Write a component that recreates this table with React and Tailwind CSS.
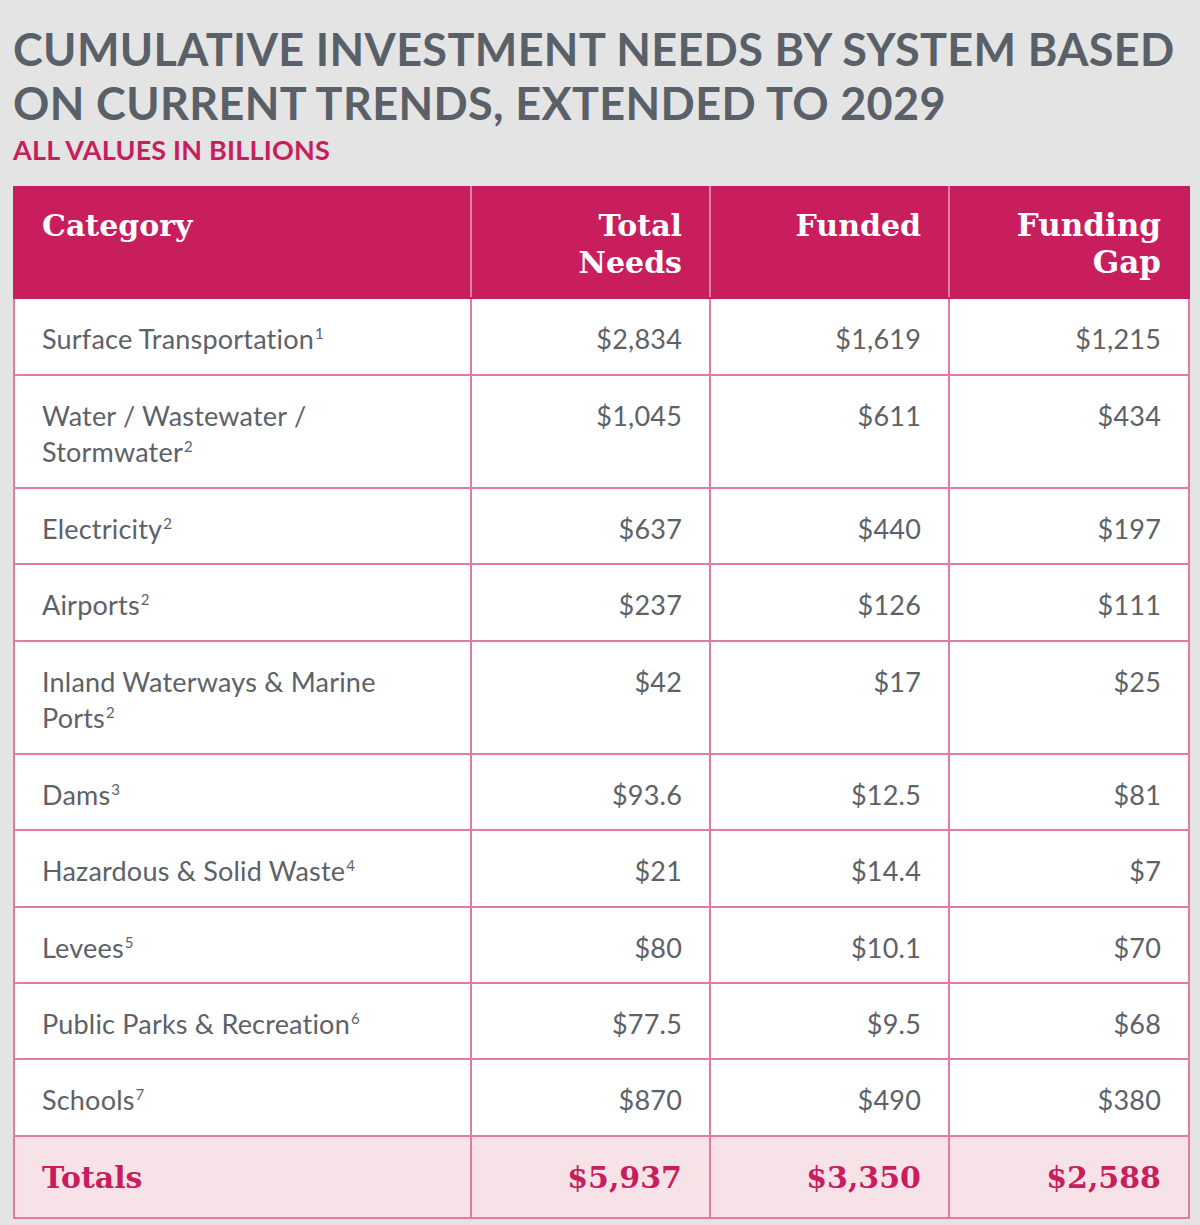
import React from 'react';

const rows = [
  { lines: ['Surface Transportation'], sup: '1', needs: '$2,834', funded: '$1,619', gap: '$1,215', h: 'h-[77px]' },
  { lines: ['Water / Wastewater /', 'Stormwater'], sup: '2', needs: '$1,045', funded: '$611', gap: '$434', h: 'h-[113px]' },
  { lines: ['Electricity'], sup: '2', needs: '$637', funded: '$440', gap: '$197', h: 'h-[76px]' },
  { lines: ['Airports'], sup: '2', needs: '$237', funded: '$126', gap: '$111', h: 'h-[77px]' },
  { lines: ['Inland Waterways & Marine', 'Ports'], sup: '2', needs: '$42', funded: '$17', gap: '$25', h: 'h-[113px]' },
  { lines: ['Dams'], sup: '3', needs: '$93.6', funded: '$12.5', gap: '$81', h: 'h-[76px]' },
  { lines: ['Hazardous & Solid Waste'], sup: '4', needs: '$21', funded: '$14.4', gap: '$7', h: 'h-[77px]' },
  { lines: ['Levees'], sup: '5', needs: '$80', funded: '$10.1', gap: '$70', h: 'h-[76px]' },
  { lines: ['Public Parks & Recreation'], sup: '6', needs: '$77.5', funded: '$9.5', gap: '$68', h: 'h-[76px]' },
  { lines: ['Schools'], sup: '7', needs: '$870', funded: '$490', gap: '$380', h: 'h-[77px]' },
];

const sans = "font-['Lato','Noto_Sans',sans-serif]";
const serif = "font-['DejaVu_Serif','Liberation_Serif',serif]";

const App = () => {
  return (
    <div className="w-[1200px] h-[1225px] bg-[#e4e4e4] pt-[22px] pl-[13px] overflow-hidden">
      <h1 className={`${sans} text-[45px] leading-[54px] font-bold text-[#5a6068] tracking-[0.35px]`}>
        CUMULATIVE INVESTMENT NEEDS BY SYSTEM BASED
        <br />
        ON CURRENT TRENDS, EXTENDED TO 2029
      </h1>
      <p className={`${sans} text-[27px] leading-[32px] font-bold text-[#c81e5e] mt-[4px] tracking-[0.2px]`}>
        ALL VALUES IN BILLIONS
      </p>
      <table className="mt-[20px] w-[1175px] border-collapse table-fixed">
        <thead>
          <tr className="h-[111px] bg-[#c81e5e] align-top">
            <th className={`${serif} w-[457px] text-left font-bold text-white text-[30px] leading-[37px] pt-[19px] pl-[27px] border-2 border-[#c81e5e] border-r-[#e47fa9]`}>
              Category
            </th>
            <th className={`${serif} w-[239px] text-right font-bold text-white text-[30px] leading-[37px] pt-[19px] pr-[27px] border-2 border-[#c81e5e] border-r-[#e47fa9]`}>
              Total
              <br />
              Needs
            </th>
            <th className={`${serif} w-[239px] text-right font-bold text-white text-[30px] leading-[37px] pt-[19px] pr-[27px] border-2 border-[#c81e5e] border-r-[#e47fa9]`}>
              Funded
            </th>
            <th className={`${serif} w-[240px] text-right font-bold text-white text-[31px] leading-[37px] pt-[19px] pr-[27px] border-2 border-[#c81e5e]`}>
              Funding
              <br />
              Gap
            </th>
          </tr>
        </thead>
        <tbody className={`${sans} text-[27px] leading-[36px] text-[#5d6168] tracking-[0.2px]`}>
          {rows.map((row) => (
            <tr key={row.lines.join(' ')} className={`bg-white align-top ${row.h}`}>
              <td className="border-2 border-[#e27aa5] pl-[27px] pt-[22px]">
                {row.lines.map((line, i) => (
                  <div key={line}>
                    {line}
                    {i === row.lines.length - 1 && (
                      <sup className="text-[15px] leading-none -top-[10px] ml-[1px]">{row.sup}</sup>
                    )}
                  </div>
                ))}
              </td>
              <td className="border-2 border-[#e27aa5] text-right pr-[27px] pt-[22px]">{row.needs}</td>
              <td className="border-2 border-[#e27aa5] text-right pr-[27px] pt-[22px]">{row.funded}</td>
              <td className="border-2 border-[#e27aa5] text-right pr-[27px] pt-[22px]">{row.gap}</td>
            </tr>
          ))}
          <tr className={`${serif} h-[82px] bg-[#f7e3e7] text-[#c81e5e] font-bold text-[30px] leading-[37px] align-middle tracking-normal`}>
            <td className="border-2 border-[#e27aa5] pl-[27px]">Totals</td>
            <td className="border-2 border-[#e27aa5] text-right pr-[27px]">$5,937</td>
            <td className="border-2 border-[#e27aa5] text-right pr-[27px]">$3,350</td>
            <td className="border-2 border-[#e27aa5] text-right pr-[27px]">$2,588</td>
          </tr>
        </tbody>
      </table>
    </div>
  );
};

export default App;
